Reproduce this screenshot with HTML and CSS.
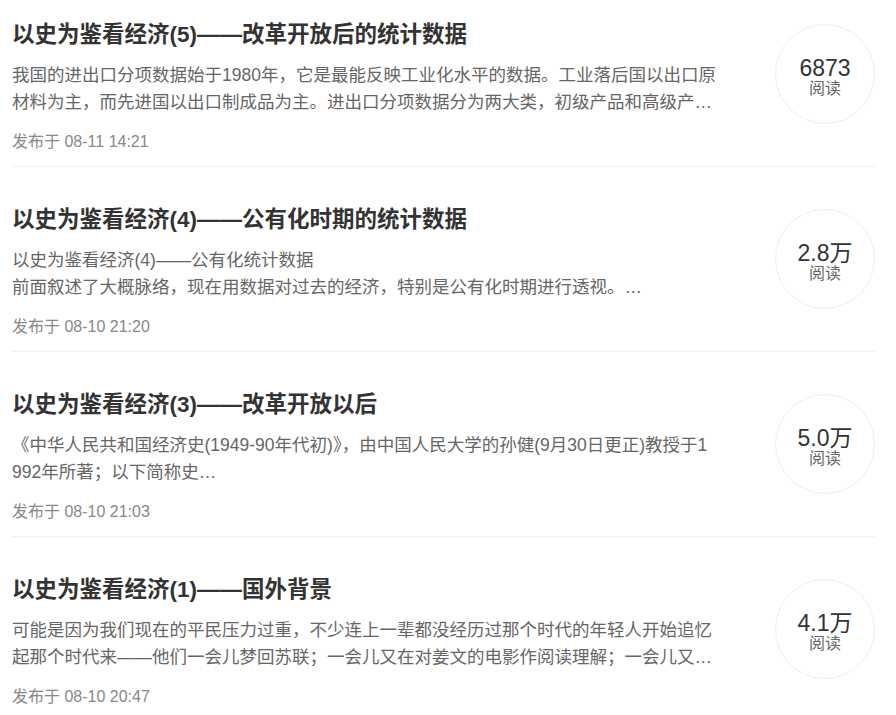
FILE: index.html
```html
<!DOCTYPE html>
<html lang="zh-CN">
<head>
<meta charset="utf-8">
<title>文章列表</title>
<link rel="stylesheet" href="styles.css">
</head>
<body>
<div class="list">
  <div class="item">
    <div class="item-main">
      <h2 class="title">以史为鉴看经济(5)——改革开放后的统计数据</h2>
      <div class="summary">
        <div class="line">我国的进出口分项数据始于1980年，它是最能反映工业化水平的数据。工业落后国以出口原</div>
        <div class="line">材料为主，而先进国以出口制成品为主。进出口分项数据分为两大类，初级产品和高级产…</div>
      </div>
      <div class="date">发布于 08-11 14:21</div>
    </div>
    <div class="views"><span class="num">6873</span><span class="label">阅读</span></div>
  </div>
  <div class="item">
    <div class="item-main">
      <h2 class="title">以史为鉴看经济(4)——公有化时期的统计数据</h2>
      <div class="summary">
        <div class="line">以史为鉴看经济(4)——公有化统计数据</div>
        <div class="line">前面叙述了大概脉络，现在用数据对过去的经济，特别是公有化时期进行透视。…</div>
      </div>
      <div class="date">发布于 08-10 21:20</div>
    </div>
    <div class="views"><span class="num">2.8万</span><span class="label">阅读</span></div>
  </div>
  <div class="item">
    <div class="item-main">
      <h2 class="title">以史为鉴看经济(3)——改革开放以后</h2>
      <div class="summary">
        <div class="line">《中华人民共和国经济史(1949-90年代初)》，由中国人民大学的孙健(9月30日更正)教授于1</div>
        <div class="line">992年所著；以下简称史…</div>
      </div>
      <div class="date">发布于 08-10 21:03</div>
    </div>
    <div class="views"><span class="num">5.0万</span><span class="label">阅读</span></div>
  </div>
  <div class="item">
    <div class="item-main">
      <h2 class="title">以史为鉴看经济(1)——国外背景</h2>
      <div class="summary">
        <div class="line">可能是因为我们现在的平民压力过重，不少连上一辈都没经历过那个时代的年轻人开始追忆</div>
        <div class="line">起那个时代来——他们一会儿梦回苏联；一会儿又在对姜文的电影作阅读理解；一会儿又…</div>
      </div>
      <div class="date">发布于 08-10 20:47</div>
    </div>
    <div class="views"><span class="num">4.1万</span><span class="label">阅读</span></div>
  </div>
</div>
</body>
</html>
```
FILE: styles.css
```css
html, body {
  margin: 0;
  padding: 0;
  background: #ffffff;
}

body {
  font-family: "Liberation Sans", "Noto Sans CJK SC", sans-serif;
  overflow: hidden;
}

.list {
  margin: -18px 21px 0 12px;
}

.item {
  display: flex;
  align-items: center;
  border-bottom: 1px solid #eef0f3;
}

.item-main {
  flex: 1;
  min-width: 0;
  padding: 38px 0 14px;
}

.title {
  margin: 0;
  font-size: 22.5px;
  line-height: 30px;
  font-weight: bold;
  color: #333333;
  white-space: nowrap;
}

.summary {
  margin-top: 12px;
  width: 730px;
  font-size: 17.5px;
  line-height: 27px;
  color: #666666;
}

.line {
  white-space: nowrap;
  overflow: hidden;
}

.date {
  margin-top: 16px;
  font-size: 16px;
  line-height: 20px;
  color: #888888;
}

.views {
  flex: none;
  box-sizing: border-box;
  width: 100px;
  height: 100px;
  border: 1px solid #eeeeee;
  border-radius: 50%;
  display: flex;
  flex-direction: column;
  align-items: center;
  justify-content: center;
  padding-top: 6px;
}

.num {
  font-size: 23px;
  line-height: 24px;
  color: #333333;
}

.label {
  font-size: 16px;
  line-height: 18px;
  color: #666666;
}
```
